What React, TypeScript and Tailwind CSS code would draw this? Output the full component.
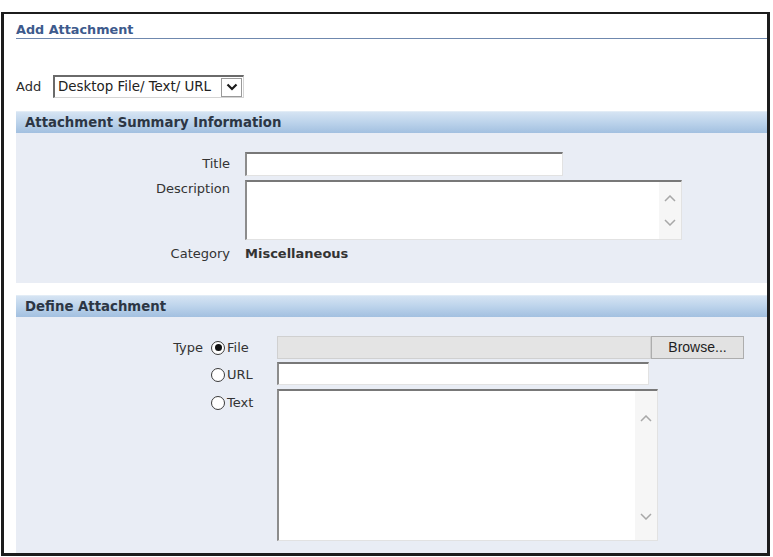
import React from "react";

const font = { fontFamily: '"DejaVu Sans", Verdana, sans-serif' };

function ScrollArrows({ up, down }: { up: number; down: number }) {
  return (
    <div className="relative w-[22px] h-full bg-[#f6f6f6]">
      <svg className="absolute left-[5px]" style={{ top: up }} width="12" height="7" viewBox="0 0 12 7">
        <polyline points="1,6 6,1 11,6" fill="none" stroke="#a8a8a8" strokeWidth="1.5" />
      </svg>
      <svg className="absolute left-[5px]" style={{ top: down }} width="12" height="7" viewBox="0 0 12 7">
        <polyline points="1,1 6,6 11,1" fill="none" stroke="#a8a8a8" strokeWidth="1.5" />
      </svg>
    </div>
  );
}

function SectionHeader({ title }: { title: string }) {
  return (
    <div className="h-[22px] flex items-center pl-[9px] bg-linear-to-b from-[#d6e4f3] via-[#bcd3eb] to-[#a2c0e0] border-t border-t-[#e2ecf6] text-[13.3px] font-bold text-[#2c3644]">
      {title}
    </div>
  );
}

function Radio({ checked }: { checked?: boolean }) {
  return (
    <div className="w-[14px] h-[14px] rounded-full border border-[#3a3a3a] bg-white flex items-center justify-center">
      {checked && <div className="w-[7px] h-[7px] rounded-full bg-[#111]" />}
    </div>
  );
}

const inputBorder =
  "bg-white border-t-2 border-l-2 border-r border-b border-t-[#787878] border-l-[#8c8c8c] border-r-[#e2e2e2] border-b-[#e2e2e2]";

export default function App() {
  return (
    <div className="w-[773px] h-[557px] bg-white overflow-hidden" style={font}>
      <div className="ml-[1px] mt-[12px] w-[769px] h-[544px] border-t-2 border-l-[3px] border-r-[3px] border-b-[3px] border-[#1c1c1c] pl-[12px] flex flex-col">
        <div className="pt-[8px] leading-[16px] text-[12.8px] font-bold text-[#3d5a8c] border-b border-b-[#6f88ae]">
          Add Attachment
        </div>

        <div className="mt-[36px] flex items-center h-[23px] text-[13px] text-[#2b2b2b]">
          <div className="w-[37px]">Add</div>
          <div className="w-[191px] h-[23px] flex items-center border-t-2 border-l-2 border-r border-b border-t-[#6a6a6a] border-l-[#6a6a6a] border-r-[#d4d4d4] border-b-[#d4d4d4] bg-white">
            <div className="flex-1 pl-[3px] text-[13.4px] text-[#222] whitespace-nowrap">Desktop File/ Text/ URL</div>
            <div className="w-[21px] h-[19px] mr-[1px] border border-[#9a9a9a] bg-white flex items-center justify-center">
              <svg width="12" height="8" viewBox="0 0 12 8">
                <polyline points="1.5,1.5 6,6 10.5,1.5" fill="none" stroke="#1a1a1a" strokeWidth="2.2" />
              </svg>
            </div>
          </div>
        </div>

        <div className="mt-[13px]">
          <SectionHeader title="Attachment Summary Information" />
        </div>
        <div className="h-[150px] bg-[#e9edf5] pt-[19px] text-[13px] text-[#333]">
          <div className="flex h-[24px]">
            <div className="w-[214px] text-right pt-[4px] leading-[16px]">Title</div>
            <div className={`ml-[15px] w-[318px] h-[24px] ${inputBorder}`} />
          </div>
          <div className="flex mt-[4px] h-[60px]">
            <div className="w-[214px] text-right pt-[1px] leading-[16px]">Description</div>
            <div className={`ml-[15px] w-[437px] h-[60px] flex justify-end ${inputBorder}`}>
              <ScrollArrows up={13} down={37} />
            </div>
          </div>
          <div className="flex mt-[4px] h-[20px] items-center">
            <div className="w-[214px] text-right">Category</div>
            <div className="ml-[15px] font-bold text-[#333]">Miscellaneous</div>
          </div>
        </div>

        <div className="mt-[12px]">
          <SectionHeader title="Define Attachment" />
        </div>
        <div className="flex-1 bg-[#e9edf5] pt-[19px] text-[13px] text-[#333]">
          <div className="flex h-[23px] items-center">
            <div className="w-[187px] text-right">Type</div>
            <div className="w-[74px] flex items-center pl-[8px] gap-[2px]">
              <Radio checked />
              <span>File</span>
            </div>
            <div className="w-[374px] h-[23px] bg-[#e4e4e4] border border-[#d0d0d0]" />
            <div
              className="w-[93px] h-[23px] bg-[#e2e2e2] border border-[#adadad] flex items-center justify-center text-[14px] text-[#1e1e1e]"
              style={{ fontFamily: '"Liberation Sans", Arial, sans-serif' }}
            >
              Browse...
            </div>
          </div>
          <div className="flex h-[23px] items-center mt-[3px]">
            <div className="w-[187px]" />
            <div className="w-[74px] flex items-center pl-[8px] gap-[2px] pt-[3px]">
              <Radio />
              <span>URL</span>
            </div>
            <div className={`w-[372px] h-[23px] ${inputBorder}`} />
          </div>
          <div className="flex mt-[4px]">
            <div className="w-[187px]" />
            <div className="w-[74px] flex items-start pl-[8px] gap-[2px] pt-[7px]">
              <Radio />
              <span className="leading-[14px]">Text</span>
            </div>
            <div className={`w-[381px] h-[152px] flex justify-end ${inputBorder}`}>
              <ScrollArrows up={24} down={122} />
            </div>
          </div>
        </div>
      </div>
    </div>
  );
}
